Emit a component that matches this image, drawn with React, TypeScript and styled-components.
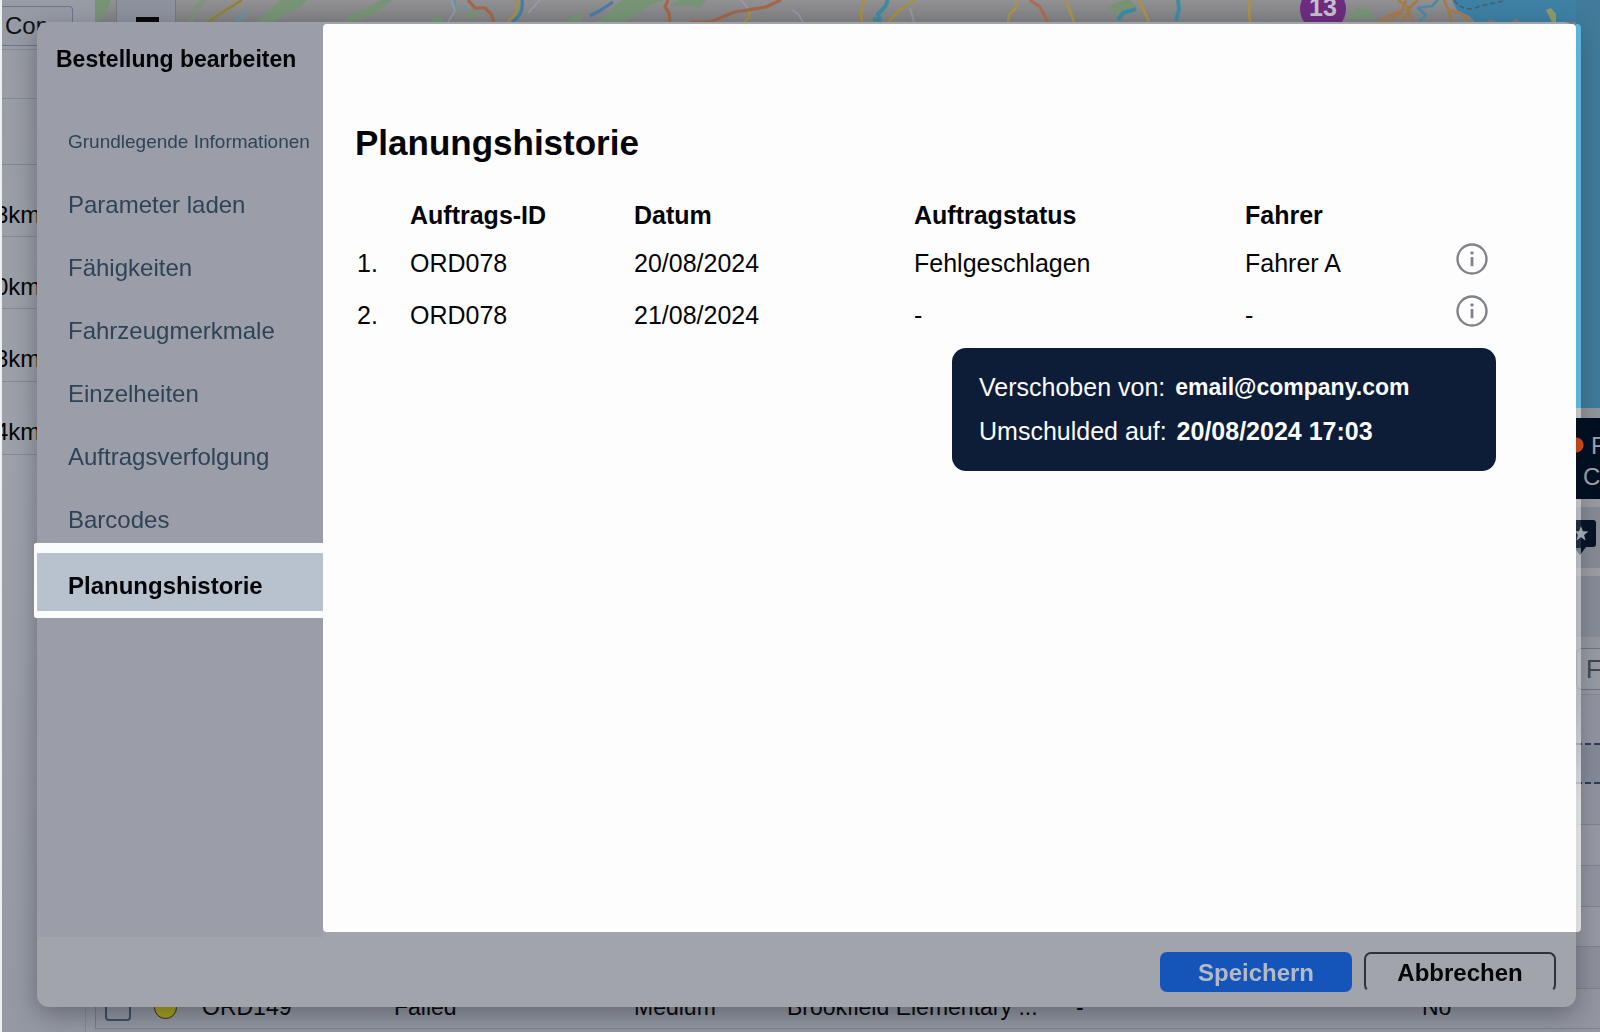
import React, { useState } from "react";
import styled, { createGlobalStyle, css } from "styled-components";

const GlobalStyle = createGlobalStyle`
  *, *::before, *::after { box-sizing: border-box; }
  html, body { margin: 0; height: 100%; overflow: hidden; }
  body {
    font-family: "Liberation Sans", Arial, Helvetica, sans-serif;
    font-size: 25px;
    color: #050507;
    background: #9397a1;
  }
  button { font-family: inherit; cursor: pointer; }
`;

/* ---------- page behind the dialog ---------- */

const Page = styled.div`
  display: flex;
  height: 100vh;
  overflow: hidden;
`;

const RouteList = styled.aside`
  flex: 0 0 95px;
  display: flex;
  flex-direction: column;
  overflow: hidden;
  border-left: 2px solid #eff0f2;
  background: linear-gradient(#989ca5, #9da1aa 45%, #9599a4);
`;

const RouteToolbar = styled.div`
  flex: 0 0 50px;
  padding-top: 6px;
  border-bottom: 1px solid #868b95;
`;

const CopyButton = styled.button`
  width: 71px;
  height: 40px;
  padding: 0 0 0 3px;
  border: 1px solid #6d7688;
  border-left: 0;
  border-radius: 0 4px 4px 0;
  background: #979ba6;
  color: #101218;
  font-size: 24px;
  line-height: 38px;
  text-align: left;
  overflow: hidden;
`;

const RouteRow = styled.div<{ $height: number }>`
  flex: 0 0 ${(p) => p.$height}px;
  padding-top: 36px;
  border-bottom: 1px solid #858a96;
  font-size: 24px;
  line-height: 28px;
  text-indent: -7px;
`;

const RouteRest = styled.div`
  flex: 1;
  width: 84px;
  border-right: 1px solid #858a96;
`;

const Centre = styled.main`
  flex: 1;
  min-width: 0;
  display: flex;
  flex-direction: column;
  justify-content: space-between;
`;

const MapView = styled.div`
  position: relative;
  height: 40px;
  background: #8b8b8d;
  overflow: hidden;
  svg { display: block; width: 100%; height: 40px; }
`;

const ZoomOut = styled.button`
  position: absolute;
  left: 22px;
  top: 0;
  display: flex;
  align-items: flex-start;
  width: 58px;
  height: 40px;
  padding: 17px 0 0 19px;
  border: 0;
  background: #8e929e;
  box-shadow: 0 0 0 1px #77797f;
`;

const MinusBar = styled.span`
  display: block;
  width: 23px;
  height: 5px;
  background: #08080a;
`;

const OrderRow = styled.div`
  display: grid;
  grid-template-columns: 49px 48px 192px 240px 153px 289px 346px 1fr;
  align-items: center;
  height: 44px;
  padding: 2px 0 0 9px;
  margin-bottom: 3px;
  border-left: 1px solid #757d8e;
  border-bottom: 1px solid #7d8290;
  font-size: 23px;
  white-space: nowrap;
`;

const OrderCheck = styled.input`
  appearance: none;
  width: 26px;
  height: 26px;
  margin: 0;
  border: 2px solid #414d66;
  border-radius: 4px;
`;

const StatusDot = styled.span`
  width: 23px;
  height: 23px;
  border: 1px solid #2c2c22;
  border-radius: 50%;
  background: #aaa41c;
`;

const SidePanel = styled.aside`
  flex: 0 0 24px;
  display: flex;
  flex-direction: column;
  overflow: hidden;
  background: #9497a0;
`;

const Band = styled.div<{ $h: number; $bg: string; $line?: string }>`
  flex: 0 0 ${(p) => p.$h}px;
  background: ${(p) => p.$bg};
  border-bottom: ${(p) => p.$line || "0"};
  overflow: hidden;
`;

const Legend = styled(Band)`
  padding: 12px 0 0 7px;
  color: #a0a4ac;
  font-size: 24px;
  line-height: 31px;
  background: radial-gradient(circle at 0 27px, #dc4f1c 7px, #010f22 8px);
`;

const LegendLine = styled.div<{ $indent?: boolean }>`
  padding-left: ${(p) => (p.$indent ? "8px" : "0")};
`;

const Filter = styled.div`
  flex: 0 0 42px;
  padding-left: 9px;
  border: 1px solid #6e7484;
  border-right: 0;
  border-radius: 6px 0 0 6px;
  background: #969aa2;
  color: #43464c;
  line-height: 40px;
`;

/* ---------- dialog ---------- */

const Overlay = styled.div`
  position: fixed;
  inset: 0;
  display: flex;
  padding: 22px 24px 25px 37px;
`;

const Dialog = styled.section`
  flex: 1;
  min-width: 0;
  display: flex;
  flex-direction: column;
  border-radius: 12px;
  background: #a1a4ab;
  box-shadow: 0 8px 26px rgba(20, 22, 30, 0.36);
`;

const DialogBody = styled.div`
  flex: 1;
  display: flex;
  min-height: 0;
`;

const Sidebar = styled.div`
  flex: 0 0 286px;
  min-width: 0;
  border-top-left-radius: 12px;
  background: #9b9da9;
`;

const DialogTitle = styled.h1`
  height: 80px;
  margin: 0;
  padding: 19px 0 0 19px;
  font-size: 23px;
  line-height: 36px;
  font-weight: 700;
  white-space: nowrap;
`;

const Nav = styled.nav`
  display: flex;
  flex-direction: column;
`;

const NavItem = styled.button<{ $active?: boolean; $compact?: boolean }>`
  height: 63px;
  padding: 26px 0 9px 31px;
  border: 0;
  background: none;
  color: #2f4357;
  font-size: ${(p) => (p.$compact ? "19px" : "24px")};
  line-height: 28px;
  text-align: left;
  white-space: nowrap;
  ${(p) =>
    p.$active &&
    css`
      height: 75px;
      margin-left: -3px;
      padding: 19px 0 11px 31px;
      border: solid #fafbfc;
      border-width: 10px 0 7px 3px;
      border-radius: 3px 0 0 3px;
      background: #b8c1ce;
      background-clip: padding-box;
      color: #050507;
      font-weight: 700;
    `}
`;

const Panel = styled.div`
  flex: 1;
  min-width: 0;
  position: relative;
  margin: 2px 0 5px;
  padding: 95px 88px 0 32px;
  border-radius: 4px 4px 0 4px;
  background: #fdfdfd;
`;

const PanelEdge = styled.span`
  position: absolute;
  left: 100%;
  top: 0;
  bottom: 0;
  width: 5px;
  border-radius: 0 4px 4px 0;
  background: linear-gradient(
    #5bb3dc 384px,
    rgba(255, 255, 255, 0.5) 384px, rgba(255, 255, 255, 0.5) 394px,
    transparent 394px, transparent 475px,
    rgba(255, 255, 255, 0.45) 475px, rgba(255, 255, 255, 0.45) 496px,
    rgba(255, 255, 255, 0.1) 496px, rgba(255, 255, 255, 0.1) 524px,
    rgba(255, 255, 255, 0.45) 524px, rgba(255, 255, 255, 0.45) 680px,
    rgba(255, 255, 255, 0.7) 780px
  );
`;

const PanelTitle = styled.h2`
  margin: 0;
  font-size: 35px;
  line-height: 48px;
  font-weight: 700;
`;

const HistoryTable = styled.table`
  width: 100%;
  margin-top: 25px;
  border-collapse: collapse;
  table-layout: fixed;
  text-align: left;
`;

const HeadCell = styled.th<{ $w?: number }>`
  width: ${(p) => (p.$w ? `${p.$w}px` : "auto")};
  height: 46px;
  padding: 0;
  font-size: 25px;
  line-height: 30px;
  font-weight: 700;
`;

const Cell = styled.td`
  height: 52px;
  padding: 0 0 2px;
  font-size: 25px;
  line-height: 30px;
  white-space: nowrap;
`;

const NumberCell = styled(Cell)`
  padding-left: 2px;
`;

const InfoCell = styled(Cell)`
  text-align: right;
`;

const InfoAnchor = styled.span`
  position: relative;
  display: inline-flex;
  vertical-align: middle;
  margin-bottom: 8px;
`;

const InfoButton = styled.button`
  display: flex;
  padding: 0;
  border: 0;
  background: none;
`;

const Tooltip = styled.div`
  position: absolute;
  top: 53px;
  right: -8px;
  width: 544px;
  padding: 17px 27px 18px;
  border-radius: 14px;
  background: #0d1c37;
  color: #fafbfd;
  font-size: 25px;
  line-height: 44px;
  text-align: left;
`;

const TooltipLine = styled.div`
  display: flex;
  gap: 10px;
  white-space: nowrap;
`;

const Email = styled.strong`
  font-size: 23px;
`;

const DialogFooter = styled.footer`
  flex: 0 0 70px;
  display: flex;
  justify-content: flex-end;
  gap: 12px;
  padding: 15px 20px;
`;

const ActionButton = styled.button<{ $primary?: boolean }>`
  width: 192px;
  height: 40px;
  padding: 2px 0 0;
  border: 2px solid ${(p) => (p.$primary ? "#1554b8" : "#2d3138")};
  ${(p) => !p.$primary && "border-bottom-color: transparent;"}
  border-radius: 7px;
  background: ${(p) => (p.$primary ? "#1554b8" : "transparent")};
  color: ${(p) => (p.$primary ? "#b4b9c6" : "#050507")};
  font-size: 24px;
  line-height: 34px;
  font-weight: 700;
`;

/* ---------- drawings ---------- */

const InfoIcon = () => (
  <svg width="32" height="32" viewBox="0 0 32 32" aria-hidden="true">
    <circle cx="16" cy="16" r="14.5" fill="none" stroke="#81838b" strokeWidth="2.4" />
    <circle cx="16" cy="9.9" r="1.7" fill="#81838b" />
    <path d="M16 14V23.2" stroke="#81838b" strokeWidth="2.8" />
  </svg>
);

const MapDrawing = () => (
  <svg viewBox="95 0 1481 40" preserveAspectRatio="xMinYMin slice" aria-hidden="true">
    <defs>
      <linearGradient id="land" x1="0" y1="0" x2="0" y2="1">
        <stop offset="0" stopColor="#919193" />
        <stop offset="0.6" stopColor="#818184" />
      </linearGradient>
    </defs>
    <rect x="95" y="0" width="1481" height="40" fill="url(#land)" />
    <g fill="#789477">
      <path d="M95 0H111L107 11 98 22V40H95Z" />
      <path d="M187 22 194 8 200 0H207L196 13 193 22Z" opacity=".7" />
      <path d="M256 22 272 8 280 0H307L296 11 286 14 276 22Z" />
      <path d="M343 22 352 13 363 10 374 4 382 0H393L383 7 375 13 362 20Z" />
      <path d="M430 22 434 16 441 18 445 22ZM465 18 471 10 482 13 474 18Z" />
      <path d="M564 22 576 15 584 14 580 22ZM597 22 610 11 622 0H665L651 5 637 15 623 22Z" />
      <path d="M668 6 680 0H706L700 8 690 6Z" />
      <path d="M1106 10 1115 3 1124 0H1130L1138 10 1126 15 1118 22 1115 12Z" />
      <path d="M1346 18 1354 12 1358 7 1364 9 1371 10 1375 19Z" />
      <path d="M204 19 211 14 214 20Z" />
    </g>
    <path d="M1452 0 1457 10 1469 16 1475 22H1576V0Z" fill="#3e81a5" />
    <path d="M1454 0Q1464 14 1480 6L1503 1" fill="none" stroke="#426271" strokeWidth="1.5" strokeDasharray="5 3" />
    <path d="M1546 10 1551 8 1556 14V22H1552Z" fill="#909d68" />
    <path d="M1486 22 1490 19 1496 22ZM1512 22 1516 18 1520 22Z" fill="#777e7b" />
    <g fill="none" stroke="#9a9dad" strokeWidth="2" opacity=".75">
      <path d="M448 22 455 11 451 0M528 13 540 0M741 0 748 8M792 10 798 14 803 22M910 8 914 22" />
    </g>
    <g fill="none" strokeLinejoin="round" strokeWidth="2.6">
      <path d="M208 22 226 10 242 0" stroke="#94822f" />
      <path d="M516 0Q521 13 507 22M864 0 861 15 862 22M888 22 901 9 915 0M749 11 750 17 744 22" stroke="#a69140" />
      <path d="M1017 0 1016 8 1009 15 1008 22M1066 0 1074 22M1139 0 1149 22M1250 0 1249 12 1250 22" stroke="#ad9347" />
      <path d="M468 0 475 8 485 8 491 14 494 22M668 0 665 7 669 13 670 22M690 22H710L735 12 766 7 781 0" stroke="#a36749" strokeWidth="3.2" />
      <path d="M1030 0 1040 7 1048 22" stroke="#ad6c55" strokeWidth="3.2" />
      <path d="M1378 22 1390 15 1402 11 1406 0M1398 0 1410 9 1402 22M1413 22 1407 10 1418 0M1444 0 1449 12 1452 22M1448 10 1461 14 1470 21M1386 22 1402 13" stroke="#a77a48" />
      <path d="M522 0Q524 15 512 22M590 16 601 10 613 2" stroke="#477da5" strokeWidth="3.2" />
      <path d="M888 0 885 7 878 14 880 20 873 19" stroke="#3e8ca0" strokeWidth="4" />
      <path d="M1118 20 1123 13 1136 9M1178 0 1179 9 1176 21" stroke="#3e8ca6" strokeWidth="4" />
      <path d="M1419 22 1426 15 1418 8 1432 6 1438 0" stroke="#4c8aa8" />
      <path d="M244 10Q245 21 235 20" stroke="#6096ac" />
      <path d="M455 0Q454 12 464 10L466 4" stroke="#5b9aaa" strokeWidth="2" strokeDasharray="5 3" />
    </g>
    <circle cx="1323" cy="9" r="23" fill="#6e2d80" />
    <text x="1323" y="16" textAnchor="middle" fill="#c7c1cd" fontFamily="Liberation Sans, Arial, sans-serif" fontSize="25" fontWeight="700">
      13
    </text>
  </svg>
);

const PinIcon = () => (
  <svg width="24" height="61" viewBox="0 0 24 61" aria-hidden="true">
    <path d="M0 13H17Q20 13 20 16V37Q20 40 17 40H10L4 48 0 43Z" fill="#061427" />
    <path d="M5 19 6.9 24.2 12.4 24.5 8.1 28 9.6 33.4 5 30.3 .4 33.4 1.9 28 0 25V24.3L3.1 24.2Z" fill="#aab2bd" />
  </svg>
);

/* ---------- data ---------- */

const sections = [
  "Grundlegende Informationen",
  "Parameter laden",
  "Fähigkeiten",
  "Fahrzeugmerkmale",
  "Einzelheiten",
  "Auftragsverfolgung",
  "Barcodes",
  "Planungshistorie",
];

const history = [
  { id: "ORD078", date: "20/08/2024", status: "Fehlgeschlagen", driver: "Fahrer A" },
  { id: "ORD078", date: "21/08/2024", status: "-", driver: "-" },
];

const routes = [
  { distance: "3km", height: 72 },
  { distance: "0km", height: 72 },
  { distance: "3km", height: 73 },
  { distance: "4km", height: 73 },
];

export default function App() {
  const [active, setActive] = useState("Planungshistorie");
  const [openRow, setOpenRow] = useState(1);

  return (
    <>
      <GlobalStyle />
      <Page>
        <RouteList>
          <RouteToolbar>
            <CopyButton>Cop</CopyButton>
          </RouteToolbar>
          <Band $h={49} $bg="transparent" $line="1px solid #858b95" />
          <Band $h={66} $bg="transparent" $line="1px solid #7e8794" />
          {routes.map((r, i) => (
            <RouteRow key={i} $height={r.height}>{r.distance}</RouteRow>
          ))}
          <RouteRest />
        </RouteList>
        <Centre>
          <MapView>
            <MapDrawing />
            <ZoomOut aria-label="Zoom out"><MinusBar /></ZoomOut>
          </MapView>
          <OrderRow>
            <OrderCheck type="checkbox" aria-label="ORD149" />
            <StatusDot />
            <span>ORD149</span>
            <span>Failed</span>
            <span>Medium</span>
            <span>Brookfield Elementary ...</span>
            <span>-</span>
            <span>No</span>
          </OrderRow>
        </Centre>
        <SidePanel>
          <Band $h={408} $bg="#417a9a" />
          <Band $h={10} $bg="#92949b" />
          <Legend $h={81} $bg="#010f22">
            <LegendLine $indent>F</LegendLine>
            <LegendLine>Cu</LegendLine>
          </Legend>
          <Band $h={8} $bg="#999aa2" />
          <Band $h={61} $bg="#858a94"><PinIcon /></Band>
          <Band $h={8} $bg="#9b9ca3" />
          <Band $h={61} $bg="#848c97" />
          <Band $h={11} $bg="#94969e" />
          <Filter>F</Filter>
          <Band $h={5} $bg="#9497a0" $line="1px solid #858994" />
          <Band $h={50} $bg="#9194a0" $line="2px dashed #2f3c52" />
          <Band $h={39} $bg="#838a97" $line="2px dashed #2f3c52" />
          <Band $h={41} $bg="#9194a0" $line="1px solid #7f838f" />
          <Band $h={41} $bg="#9699a3" $line="1px solid #7f838f" />
          <Band $h={41} $bg="#9194a0" $line="1px solid #7f838f" />
          <Band $h={40} $bg="#9699a3" $line="1px solid #7f838f" />
          <Band $h={42} $bg="#8d909b" $line="1px solid #7f838f" />
          <Band $h={40} $bg="#9396a1" $line="1px solid #7f838f" />
        </SidePanel>
      </Page>

      <Overlay>
        <Dialog role="dialog" aria-labelledby="dialog-title">
          <DialogBody>
            <Sidebar>
              <DialogTitle id="dialog-title">Bestellung bearbeiten</DialogTitle>
              <Nav>
                {sections.map((s) => (
                  <NavItem key={s} $active={s === active} $compact={s.length > 20} onClick={() => setActive(s)}>
                    {s}
                  </NavItem>
                ))}
              </Nav>
            </Sidebar>
            <Panel>
              <PanelEdge />
              <PanelTitle>Planungshistorie</PanelTitle>
              <HistoryTable>
                <thead>
                  <tr>
                    <HeadCell $w={55} />
                    <HeadCell $w={224}>Auftrags-ID</HeadCell>
                    <HeadCell $w={280}>Datum</HeadCell>
                    <HeadCell $w={331}>Auftragstatus</HeadCell>
                    <HeadCell>Fahrer</HeadCell>
                    <HeadCell $w={48} />
                  </tr>
                </thead>
                <tbody>
                  {history.map((h, i) => (
                    <tr key={h.date}>
                      <NumberCell>{i + 1}.</NumberCell>
                      <Cell>{h.id}</Cell>
                      <Cell>{h.date}</Cell>
                      <Cell>{h.status}</Cell>
                      <Cell>{h.driver}</Cell>
                      <InfoCell>
                        <InfoAnchor>
                          <InfoButton aria-label="Details" onClick={() => setOpenRow(i)}>
                            <InfoIcon />
                          </InfoButton>
                          {openRow === i && (
                            <Tooltip role="tooltip">
                              <TooltipLine>Verschoben von: <Email>email@company.com</Email></TooltipLine>
                              <TooltipLine>Umschulded auf: <strong>20/08/2024 17:03</strong></TooltipLine>
                            </Tooltip>
                          )}
                        </InfoAnchor>
                      </InfoCell>
                    </tr>
                  ))}
                </tbody>
              </HistoryTable>
            </Panel>
          </DialogBody>
          <DialogFooter>
            <ActionButton $primary>Speichern</ActionButton>
            <ActionButton>Abbrechen</ActionButton>
          </DialogFooter>
        </Dialog>
      </Overlay>
    </>
  );
}
